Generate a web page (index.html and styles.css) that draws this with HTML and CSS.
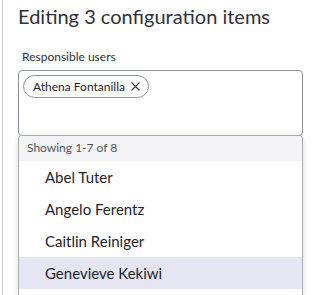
FILE: index.html
```html
<!DOCTYPE html>
<html lang="en">

<head>
    <meta charset="UTF-8">
    <meta name="viewport" content="width=device-width, initial-scale=1.0">
    <title>Editing configuration items</title>
    <link rel="stylesheet" href="styles.css">
</head>

<body>
    <div class="panel">
        <h1 class="title">Editing 3 configuration items</h1>

        <div class="field">
            <label class="label">Responsible users</label>
            <div class="picker">
                <div class="box">
                    <span class="chip">Athena Fontanilla
                        <svg class="chip-x" width="9" height="9" viewBox="0 0 9 9">
                            <path d="M0.5 0.5 L8.5 8.5 M8.5 0.5 L0.5 8.5" stroke="#3a3f45" stroke-width="1.1" fill="none" />
                        </svg>
                    </span>
                </div>
                <div class="menu">
                    <div class="menu-head">Showing 1-7 of 8</div>
                    <ul class="options">
                        <li>Abel Tuter</li>
                        <li>Angelo Ferentz</li>
                        <li>Caitlin Reiniger</li>
                        <li class="hover">Genevieve Kekiwi</li>
                    </ul>
                </div>
            </div>
        </div>
    </div>
</body>

</html>
```

FILE: styles.css
```css
* {
    margin: 0;
    padding: 0;
    box-sizing: border-box;
    font-family: 'Lato', 'Noto Sans', sans-serif;
}

body {
    background-color: #FFFFFF;
    height: 295px;
    overflow: hidden;
}

.panel {
    margin-left: 2px;
    height: 100%;
    border-left: 1px solid #C9CBD1;
    padding: 4px 9px 0 15px;
}

.title {
    font-size: 20px;
    font-weight: 400;
    color: #2E3238;
    line-height: 24px;
    margin-bottom: 21px;
}

.label {
    display: block;
    font-size: 12px;
    color: #2E3238;
    line-height: 16px;
    margin-left: 4px;
    margin-bottom: 5px;
}

.picker {
    position: relative;
}

.box {
    height: 66px;
    border: 1px solid #8C93A0;
    border-radius: 4px;
    padding: 4px 4px;
}

.chip {
    display: inline-flex;
    align-items: center;
    gap: 6px;
    height: 23px;
    padding: 0 8px 0 9px;
    border: 1px solid #8C93A0;
    border-radius: 12px;
    font-size: 12px;
    color: #1F2329;
}

.chip-x {
    display: block;
}

.menu {
    position: absolute;
    top: 65px;
    left: 0;
    right: 0;
    height: 160px;
    background-color: #FFFFFF;
    border: 1px solid #A8ADB7;
    border-bottom: none;
    border-radius: 4px 4px 0 0;
    box-shadow: 0 2px 6px rgba(0, 0, 0, 0.15);
    overflow: hidden;
}

.menu-head {
    height: 25px;
    line-height: 24px;
    background-color: #F4F4F6;
    font-size: 12px;
    color: #50555C;
    padding-left: 8px;
}

.options {
    list-style: none;
}

.options li {
    height: 32px;
    line-height: 32px;
    font-size: 15px;
    color: #1F2329;
    padding-left: 26px;
}

.options li.hover {
    background-color: #E6E6F3;
}
```
